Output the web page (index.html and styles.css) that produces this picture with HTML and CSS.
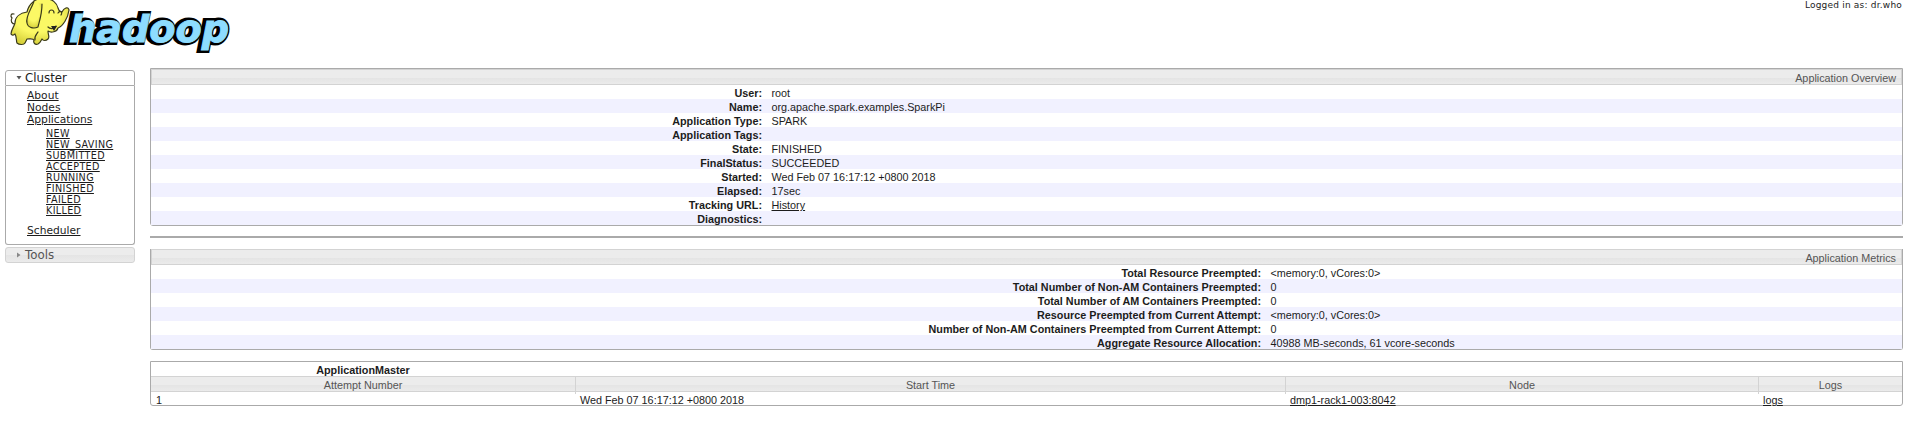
FILE: index.html
```
<!DOCTYPE html>
<html lang="en">
<head>
<meta charset="utf-8">
<title>Application Overview</title>
<link rel="stylesheet" href="styles.css">
</head>
<body>
<header class="top">
  <svg class="logo" width="240" height="60" viewBox="0 0 240 60" role="img" aria-label="hadoop">
    <defs>
      <radialGradient id="skin" cx="45%" cy="35%" r="65%"><stop offset="0.6" stop-color="#fbf865"/><stop offset="1" stop-color="#d8d23c"/></radialGradient>
    </defs>
    <g class="wordmark">
      <text class="shade" x="66" y="42" textLength="162" lengthAdjust="spacingAndGlyphs">hadoop</text>
      <text class="face" x="69" y="41.5" textLength="160" lengthAdjust="spacingAndGlyphs">hadoop</text>
    </g>
    <g stroke="#3a3a1c" stroke-width="1.2" stroke-linejoin="round" stroke-linecap="round">
      <path fill="none" d="M15 24C12 24 10 21 12 18C10 16 11 13 14 14"/>
      <path fill="url(#skin)" d="M27 12C20 13 15 17 15 23C14 27 11 30 11 34C12 36 14 35 15 34C17 37 16 41 17 43C19 45 24 45 25 43L27 39C30 39 33 38 34 40C33 43 35 45 38 44C40 43 41 41 42 39C43 41 46 41 48 39C50 37 48 35 48 31C51 33 57 32 58 28C63 26 68 18 69 10C68 6 64 8 62 12C60 11 59 12 58 8C57 3 52-1 47-1C42-2 36-1 33 2C29 5 28 8 27 12Z"/>
      <path fill="url(#skin)" d="M34 1C32 8 25 17 27 23C28 28 34 29 38 27C39 22 42 15 42 4"/>
      <path fill="none" d="M49 13C49 9 54 9 54 13M58 13C60 10 63 12 61 15M48 27C51 30 55 28 56 26M35 40C34 36 37 34 38 32"/>
    </g>
    <path class="mouth" d="M51 26L57 26L54 31Z"/>
  </svg>
  <p class="user">Logged in as: dr.who</p>
</header>
<div class="layout">
  <nav class="nav">
    <h3 class="nav-head open"><svg class="tri" viewBox="0 0 6 6"><path d="M0.5 1H5.5L3 4.5Z"/></svg><span class="nav-title">Cluster</span></h3>
    <div class="nav-body">
      <a class="item">About</a>
      <a class="item">Nodes</a>
      <a class="item">Applications</a>
      <div class="states"><a>NEW</a><a>NEW_SAVING</a><a>SUBMITTED</a><a>ACCEPTED</a><a>RUNNING</a><a>FINISHED</a><a>FAILED</a><a>KILLED</a></div>
      <a class="item">Scheduler</a>
    </div>
    <h3 class="nav-head closed"><svg class="tri" viewBox="0 0 6 6"><path d="M1 0.5V5.5L4.5 3Z"/></svg><span class="nav-title">Tools</span></h3>
  </nav>
  <main class="main">
    <section class="panel overview">
      <h2 class="bar">Application Overview</h2>
      <dl class="info">
        <dt>User:</dt><dd>root</dd>
        <dt>Name:</dt><dd>org.apache.spark.examples.SparkPi</dd>
        <dt>Application Type:</dt><dd>SPARK</dd>
        <dt>Application Tags:</dt><dd></dd>
        <dt>State:</dt><dd>FINISHED</dd>
        <dt>FinalStatus:</dt><dd>SUCCEEDED</dd>
        <dt>Started:</dt><dd>Wed Feb 07 16:17:12 +0800 2018</dd>
        <dt>Elapsed:</dt><dd>17sec</dd>
        <dt>Tracking URL:</dt><dd><a>History</a></dd>
        <dt>Diagnostics:</dt><dd></dd>
      </dl>
    </section>
    <hr class="rule">
    <section class="panel metrics">
      <h2 class="bar">Application Metrics</h2>
      <dl class="info">
        <dt>Total Resource Preempted:</dt><dd>&lt;memory:0, vCores:0&gt;</dd>
        <dt>Total Number of Non-AM Containers Preempted:</dt><dd>0</dd>
        <dt>Total Number of AM Containers Preempted:</dt><dd>0</dd>
        <dt>Resource Preempted from Current Attempt:</dt><dd>&lt;memory:0, vCores:0&gt;</dd>
        <dt>Number of Non-AM Containers Preempted from Current Attempt:</dt><dd>0</dd>
        <dt>Aggregate Resource Allocation:</dt><dd>40988 MB-seconds, 61 vcore-seconds</dd>
      </dl>
    </section>
    <section class="panel attempts">
      <div class="row master"><b>ApplicationMaster</b></div>
      <div class="row heads"><span>Attempt Number</span><span>Start Time</span><span>Node</span><span>Logs</span></div>
      <div class="row data"><span>1</span><span>Wed Feb 07 16:17:12 +0800 2018</span><span><a>dmp1-rack1-003:8042</a></span><span><a>logs</a></span></div>
    </section>
  </main>
</div>
</body>
</html>
```
FILE: styles.css
```
* { box-sizing: border-box; }
body { margin: 0; background: #fff; color: #1c1c1c; font: 10.8px/14px "Liberation Sans", Arial, sans-serif; overflow: hidden; }
h2, h3, p, dl, dd { margin: 0; font-weight: normal; }
a { text-decoration: underline; }
.top { display: flex; justify-content: space-between; height: 68px; }
.logo { display: block; }
.mouth { fill: #222; }
.wordmark text { font: italic bold 38px "DejaVu Sans", sans-serif; stroke-linejoin: miter; stroke-miterlimit: 2; }
.shade { fill: #000; stroke: #000; stroke-width: 6px; }
.face { fill: #8ddcff; stroke: #8ddcff; stroke-width: 1px; }
.user { padding: 0 8px 0 0; font: 9px/10px "DejaVu Sans", Verdana, sans-serif; letter-spacing: 0.2px; }
.layout { display: flex; }
.nav { width: 130px; margin: 2px 15px 0 5px; font-family: "DejaVu Sans", Verdana, sans-serif; }
.nav-head { display: flex; align-items: center; height: 16px; border: 1px solid #aaa; font-size: 11.8px; padding-left: 10px; }
.open { border-radius: 3px 3px 0 0; }
.closed { margin-top: 2px; border-color: #d3d3d3; border-radius: 3px; background: linear-gradient(#ececec 50%, #e4e4e4 50%, #ebebeb); color: #555; }
.tri { width: 6px; height: 6px; margin-right: 3px; fill: #555; }
.closed .tri { fill: #888; }
.nav-body { display: flex; flex-direction: column; align-items: flex-start; height: 159px; padding: 4px 0 0 21px; border: 1px solid #aaa; border-top: 0; border-radius: 0 0 3px 3px; }
.item { font-size: 10.7px; line-height: 12px; }
.states { display: flex; flex-direction: column; align-items: flex-start; margin: 2px 0 9px 19px; font-size: 9.6px; line-height: 11px; letter-spacing: 0.35px; }
.main { flex: none; width: 1753px; }
.panel { border: 1px solid #aaa; border-radius: 0 0 3px 3px; }
.bar { height: 16px; border: 1px solid #d3d3d3; background: linear-gradient(#ececec 55%, #e4e4e4 55%, #ebebeb); color: #555; font-size: 10.8px; line-height: 16px; text-align: right; padding-right: 5px; }
.info { display: grid; grid-auto-rows: 14px; line-height: 16px; }
.overview .info { grid-template-columns: 615px 1fr; }
.metrics .info { grid-template-columns: 1114px 1fr; }
.info dt { font-weight: bold; text-align: right; padding-right: 4px; }
.info dd { padding-left: 5.5px; }
.info dt:nth-of-type(even), .info dd:nth-of-type(even) { background: #f1f1ff; }
.rule { height: 2px; margin: 10px 0 11px; border: 0; background: #aaa; }
.metrics { border-top: 0; }
.attempts { margin-top: 11px; }
.row { display: grid; grid-template-columns: 424px 710px 473px 1fr; }
.master { height: 14px; line-height: 16px; text-align: center; }
.heads { height: 16px; line-height: 17px; color: #555; background: linear-gradient(#ececec 55%, #e4e4e4 55%, #ebebeb); border: solid #d3d3d3; border-width: 1px 0; text-align: center; }
.heads span + span { border-left: 1px solid #d3d3d3; }
.data { height: 13px; line-height: 17px; }
.data span { padding-left: 5px; }
```
